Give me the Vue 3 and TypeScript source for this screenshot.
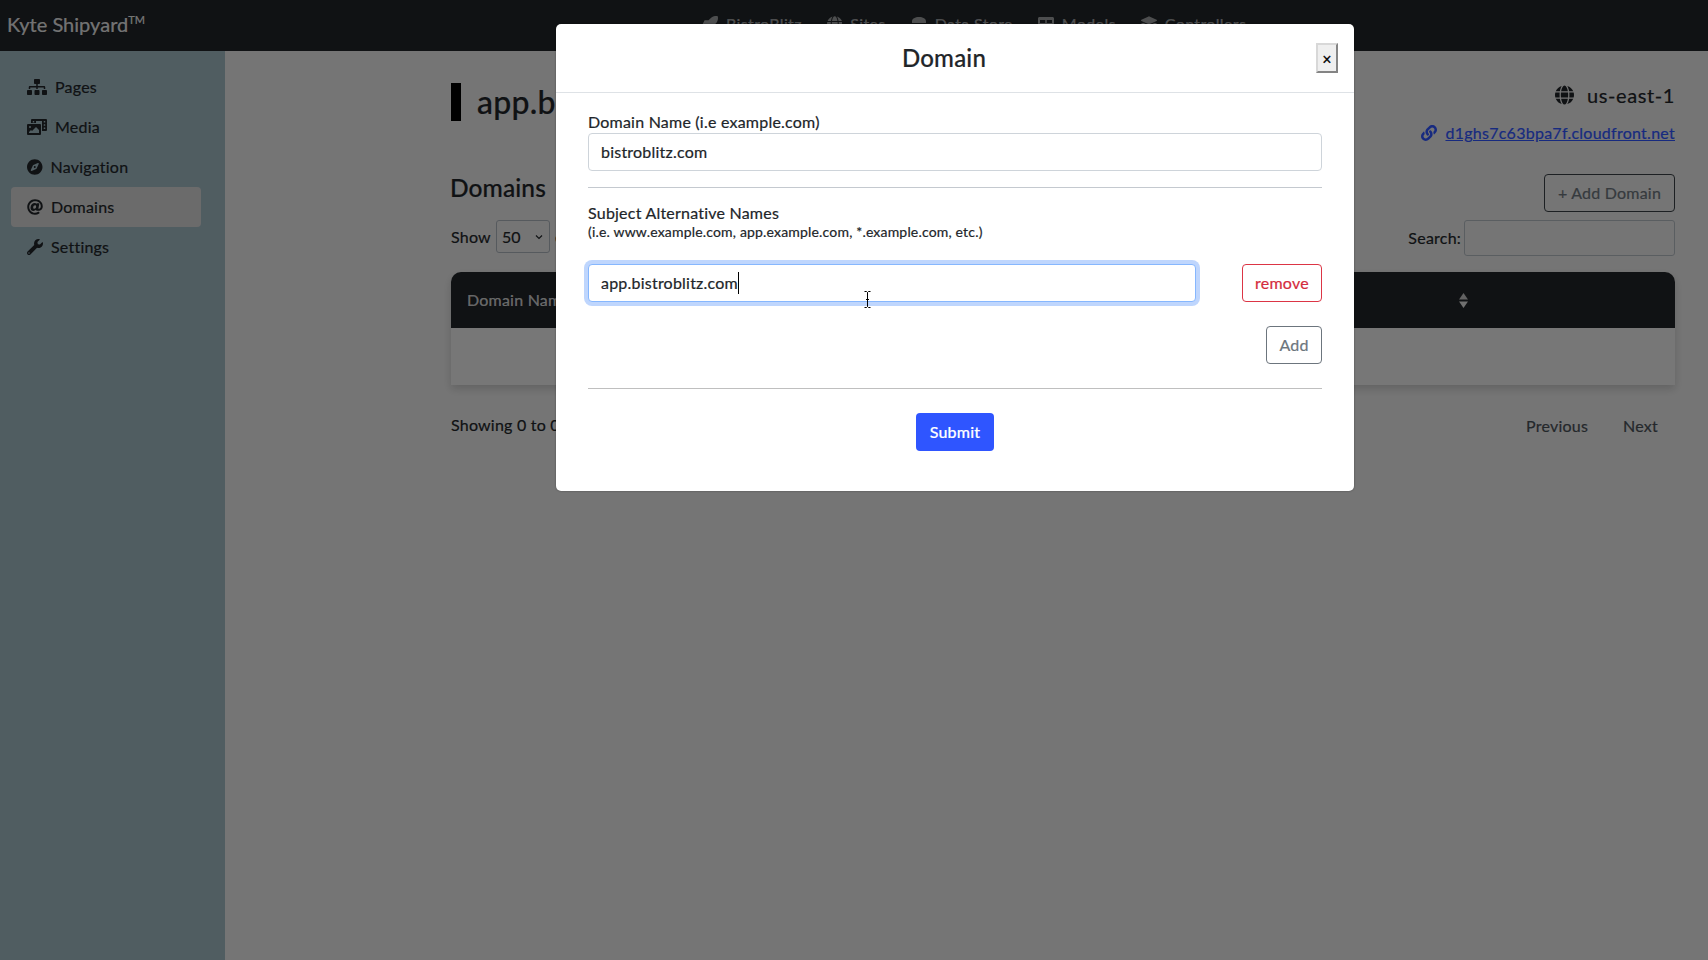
<script setup lang="ts">
interface Icon {
  w: number
  d: string
}

const icons: Record<string, Icon> = {
  sitemap: {
    w: 640,
    d: 'M128 352H32c-17.67 0-32 14.33-32 32v96c0 17.67 14.33 32 32 32h96c17.67 0 32-14.33 32-32v-96c0-17.67-14.33-32-32-32zm-24-80h192v48h48v-48h192v48h48v-57.59c0-21.17-17.23-38.41-38.41-38.41H344v-64h40c17.67 0 32-14.33 32-32V32c0-17.67-14.33-32-32-32H256c-17.67 0-32 14.33-32 32v96c0 17.67 14.33 32 32 32h40v64H94.41C73.23 224 56 241.23 56 262.41V320h48v-48zm264 80h-96c-17.67 0-32 14.33-32 32v96c0 17.67 14.33 32 32 32h96c17.67 0 32-14.33 32-32v-96c0-17.67-14.33-32-32-32zm240 0h-96c-17.67 0-32 14.33-32 32v96c0 17.67 14.33 32 32 32h96c17.67 0 32-14.33 32-32v-96c0-17.67-14.33-32-32-32z',
  },
  media: {
    w: 640,
    d: 'M608 0H160a32 32 0 0 0-32 32v96h160V64h192v320h128a32 32 0 0 0 32-32V32a32 32 0 0 0-32-32zM232 103a9 9 0 0 1-9 9h-30a9 9 0 0 1-9-9V73a9 9 0 0 1 9-9h30a9 9 0 0 1 9 9zm352 208a9 9 0 0 1-9 9h-30a9 9 0 0 1-9-9v-30a9 9 0 0 1 9-9h30a9 9 0 0 1 9 9zm0-104a9 9 0 0 1-9 9h-30a9 9 0 0 1-9-9v-30a9 9 0 0 1 9-9h30a9 9 0 0 1 9 9zm0-104a9 9 0 0 1-9 9h-30a9 9 0 0 1-9-9V73a9 9 0 0 1 9-9h30a9 9 0 0 1 9 9zM416 160H32a32 32 0 0 0-32 32v288a32 32 0 0 0 32 32h384a32 32 0 0 0 32-32V192a32 32 0 0 0-32-32zM96 224a32 32 0 1 1-32 32 32 32 0 0 1 32-32zm288 224H64v-32l64-64 32 32 128-128 96 96z',
  },
  compass: {
    w: 496,
    d: 'M225.38 233.37c-12.5 12.5-12.5 32.76 0 45.25 12.49 12.5 32.76 12.5 45.25 0 12.5-12.5 12.5-32.76 0-45.25-12.5-12.49-32.76-12.49-45.25 0zM248 8C111.03 8 0 119.03 0 256s111.03 248 248 248 248-111.03 248-248S384.97 8 248 8zm126.14 148.05L308.17 300.4a31.938 31.938 0 0 1-15.77 15.77l-144.34 65.97c-16.65 7.61-33.81-9.55-26.2-26.2l65.98-144.35a31.938 31.938 0 0 1 15.77-15.77l144.34-65.97c16.65-7.6 33.8 9.55 26.19 26.2z',
  },
  at: {
    w: 512,
    d: 'M256 8C118.941 8 8 118.919 8 256c0 137.059 110.919 248 248 248 48.154 0 95.342-14.14 135.408-40.223 12.005-7.815 14.625-24.288 5.552-35.372l-10.177-12.433c-7.671-9.371-21.179-11.667-31.373-5.129C325.92 429.757 291.314 440 256 440c-101.458 0-184-82.542-184-184S154.542 72 256 72c100.139 0 184 57.619 184 160 0 38.786-21.093 79.742-58.17 83.693-17.349-.454-16.91-12.857-13.476-30.024l23.433-121.11C394.653 149.75 383.308 136 368.225 136h-44.981a13.518 13.518 0 0 0-13.432 11.993l-.01.092c-14.697-17.901-40.448-21.775-59.971-21.775-74.58 0-137.831 62.234-137.831 151.46 0 65.303 36.785 105.87 96 105.87 26.984 0 57.369-15.637 74.991-38.333 9.522 34.104 40.613 34.103 70.71 34.103C462.609 379.41 504 307.798 504 232 504 95.653 394.023 8 256 8zm-21.68 304.43c-22.249 0-36.07-15.623-36.07-40.771 0-44.993 30.779-72.729 58.63-72.729 22.292 0 35.601 15.241 35.601 40.77 0 45.061-33.875 72.73-58.161 72.73z',
  },
  wrench: {
    w: 512,
    d: 'M507.73 109.1c-2.24-9.03-13.54-12.09-20.12-5.51l-74.36 74.36-67.88-11.31-11.31-67.88 74.36-74.36c6.62-6.62 3.43-17.9-5.66-20.16-47.38-11.74-99.55.91-136.58 37.93-39.64 39.64-50.55 97.1-34.05 147.2L18.74 402.76c-24.99 24.99-24.99 65.51 0 90.5 24.99 24.99 65.51 24.99 90.5 0l213.21-213.21c50.12 16.71 107.47 5.68 147.37-34.22 37.07-37.07 49.7-89.32 37.91-136.73zM64 472c-13.25 0-24-10.75-24-24 0-13.26 10.75-24 24-24s24 10.74 24 24c0 13.25-10.75 24-24 24z',
  },
  globe: {
    w: 496,
    d: 'M336.5 160C322 70.7 287.8 8 248 8s-74 62.7-88.5 152h177zM152 256c0 22.2 1.2 43.5 3.3 64h185.3c2.1-20.5 3.3-41.8 3.3-64s-1.2-43.5-3.3-64H155.3c-2.1 20.5-3.3 41.8-3.3 64zm324.7-96c-28.6-67.9-86.5-120.4-158-141.6 24.4 33.8 41.2 84.7 50 141.6h108zM177.2 18.4C105.8 39.6 47.8 92.1 19.3 160h108c8.7-56.9 25.5-107.8 49.9-141.6zM487.4 192H372.7c2.1 21 3.3 42.5 3.3 64s-1.2 43-3.3 64h114.6c5.5-20.5 8.6-41.8 8.6-64s-3.1-43.5-8.5-64zM120 256c0-21.5 1.2-43 3.3-64H8.6C3.2 212.5 0 233.8 0 256s3.2 43.5 8.6 64h114.6c-2-21-3.2-42.5-3.2-64zm39.5 96c14.5 89.3 48.7 152 88.5 152s74-62.7 88.5-152h-177zm159.3 141.6c71.4-21.2 129.4-73.7 158-141.6h-108c-8.8 56.9-25.6 107.8-50 141.6zM19.3 352c28.6 67.9 86.5 120.4 158 141.6-24.4-33.8-41.2-84.7-50-141.6h-108z',
  },
  link: {
    w: 512,
    d: 'M326.612 185.391c59.747 59.809 58.927 155.698.36 214.59-.11.12-.24.25-.36.37l-67.2 67.2c-59.27 59.27-155.699 59.262-214.96 0-59.27-59.26-59.27-155.7 0-214.96l37.106-37.106c9.84-9.84 26.786-3.3 27.294 10.606.648 17.722 3.826 35.527 9.69 52.721 1.986 5.822.567 12.262-3.783 16.612l-13.087 13.087c-28.026 28.026-28.905 73.66-1.155 101.96 28.024 28.579 74.086 28.749 102.325.51l67.2-67.19c28.191-28.191 28.073-73.757 0-101.83-3.701-3.694-7.429-6.564-10.341-8.569a16.037 16.037 0 0 1-6.947-12.606c-.396-10.567 3.348-21.456 11.698-29.806l21.054-21.055c5.521-5.521 14.182-6.199 20.584-1.731a152.482 152.482 0 0 1 20.522 17.197zM467.547 44.449c-59.261-59.262-155.69-59.27-214.96 0l-67.2 67.2c-.12.12-.25.25-.36.37-58.566 58.892-59.387 154.781.36 214.59a152.454 152.454 0 0 0 20.521 17.196c6.402 4.468 15.064 3.789 20.584-1.731l21.054-21.055c8.35-8.35 12.094-19.239 11.698-29.806a16.037 16.037 0 0 0-6.947-12.606c-2.912-2.005-6.64-4.875-10.341-8.569-28.073-28.073-28.191-73.639 0-101.83l67.2-67.19c28.239-28.239 74.3-28.069 102.325.51 27.75 28.3 26.872 73.934-1.155 101.96l-13.087 13.087c-4.35 4.35-5.769 10.79-3.783 16.612 5.864 17.194 9.042 34.999 9.69 52.721.509 13.906 17.454 20.446 27.294 10.606l37.106-37.106c59.271-59.259 59.271-155.699.001-214.959z',
  },
  rocket: {
    w: 512,
    d: 'M505 19c-2-9-9-15-17-17-60-13-150 4-222 76l-58 58H96c-9 0-17 5-21 13L10 279c-5 10 2 23 14 23h106l80 80v106c0 12 13 19 23 14l130-65c8-4 13-12 13-21V304l58-58c72-72 89-162 71-227z',
  },
  database: {
    w: 512,
    d: 'M256 32C130 32 32 80 32 176v48h448v-48C480 80 382 32 256 32zM0 256h512v48H0zM64 336h384v112c0 20-14 32-32 32H96c-18 0-32-12-32-32z',
  },
  table: {
    w: 512,
    d: 'M464 32H48C21 32 0 53 0 80v352c0 27 21 48 48 48h416c27 0 48-21 48-48V80c0-27-21-48-48-48zM232 224H64v-96h168zm216 0H280v-96h168zM232 416H64v-144h168zm216 0H280v-144h168z',
  },
  layers: {
    w: 512,
    d: 'M13 118 243 13c8-4 18-4 26 0l230 105c17 8 17 34 0 42L269 265c-8 4-18 4-26 0L13 160c-17-8-17-34 0-42zM499 240l-57-26-158 72c-18 8-38 8-56 0L70 214l-57 26c-17 8-17 34 0 42l230 104c8 4 18 4 26 0l230-104c17-8 17-34 0-42zM499 367l-57-26-158 72c-18 8-38 8-56 0L70 341l-57 26c-17 8-17 34 0 42l230 104c8 4 18 4 26 0l230-104c17-8 17-34 0-42z',
  },
}

const navLinks = [
  { label: 'BistroBlitz', icon: icons.rocket },
  { label: 'Sites', icon: icons.globe },
  { label: 'Data Store', icon: icons.database },
  { label: 'Models', icon: icons.table },
  { label: 'Controllers', icon: icons.layers },
]

const sideLinks = [
  { label: 'Pages', icon: icons.sitemap, active: false },
  { label: 'Media', icon: icons.media, active: false },
  { label: 'Navigation', icon: icons.compass, active: false },
  { label: 'Domains', icon: icons.at, active: true },
  { label: 'Settings', icon: icons.wrench, active: false },
]
</script>

<template>
  <div class="page">
    <header class="topbar">
      <span class="brand">Kyte Shipyard<sup>TM</sup></span>
      <nav class="topnav">
        <a v-for="item in navLinks" :key="item.label" class="topnav-link">
          <svg class="topnav-icon" :width="16 * item.icon.w / 512" height="16" :viewBox="`0 0 ${item.icon.w} 512`">
            <path :d="item.icon.d" fill="currentColor" />
          </svg>
          {{ item.label }}
        </a>
      </nav>
    </header>

    <div class="shell">
      <aside class="sidebar">
        <a v-for="item in sideLinks" :key="item.label" class="side-link" :class="{ active: item.active }">
          <svg :width="16 * item.icon.w / 512" height="16" :viewBox="`0 0 ${item.icon.w} 512`">
            <path :d="item.icon.d" fill="currentColor" />
          </svg>
          <span>{{ item.label }}</span>
        </a>
      </aside>

      <main class="content">
        <div class="site-head">
          <h1 class="site-title">app.bistroblitz.com</h1>
          <div class="site-meta">
            <div class="region">
              <svg width="19" height="20" viewBox="0 0 496 512"><path :d="icons.globe.d" fill="currentColor" /></svg>
              <span>us-east-1</span>
            </div>
            <div class="cdn">
              <svg width="16" height="16" viewBox="0 0 512 512"><path :d="icons.link.d" fill="currentColor" /></svg>
              <a>d1ghs7c63bpa7f.cloudfront.net</a>
            </div>
          </div>
        </div>

        <div class="section-head">
          <h3>Domains</h3>
          <button class="btn-add">+ Add Domain</button>
        </div>

        <div class="table-tools">
          <div class="length">
            Show
            <div class="select-wrap">
              <span>50</span>
              <svg width="8" height="6" viewBox="0 0 16 12"><path d="M2 3l6 6 6-6" fill="none" stroke="currentColor" stroke-width="2.4" /></svg>
            </div>
            entries
          </div>
          <div class="search">
            Search:
            <input class="search-input" type="text" />
          </div>
        </div>

        <div class="table">
          <div class="table-head">
            <span>Domain Name</span>
            <svg class="sort" width="9" height="15" viewBox="0 0 9 15">
              <path d="M4.5 0L9 6.5H0z" fill="#c4c4c4" />
              <path d="M4.5 15L9 8.5H0z" fill="#e0e0e0" />
            </svg>
          </div>
          <div class="table-body"></div>
        </div>

        <div class="table-foot">
          <span>Showing 0 to 0 of 0 entries</span>
          <div class="pager">
            <a>Previous</a>
            <a>Next</a>
          </div>
        </div>
      </main>
    </div>

    <div class="backdrop"></div>

    <div class="modal">
      <div class="modal-head">
        <h4>Domain</h4>
        <button class="close">×</button>
      </div>
      <form class="modal-body">
        <label class="field-label">Domain Name (i.e example.com)</label>
        <input class="field" type="text" value="bistroblitz.com" />
        <hr class="rule first" />
        <div class="field-label">Subject Alternative Names</div>
        <small class="hint">(i.e. www.example.com, app.example.com, *.example.com, etc.)</small>
        <div class="san-row">
          <div class="san-input">
            <input class="field focused" type="text" value="app.bistroblitz.com" />
            <span class="caret"></span>
          </div>
          <button type="button" class="btn-remove">remove</button>
        </div>
        <div class="add-row">
          <button type="button" class="btn-more">Add</button>
        </div>
        <hr class="rule" />
        <div class="submit-row">
          <button type="button" class="btn-submit">Submit</button>
        </div>
      </form>
      <!-- mouse pointer caught in the shot -->
      <svg class="pointer" width="7" height="17" viewBox="0 0 7 17">
        <path d="M.5.5h2l1 1 1-1h2M3.5 1.5v14M.5 16.5h2l1-1 1 1h2M2 8.5h3" fill="none" stroke="#000" stroke-width="1" />
      </svg>
    </div>
  </div>
</template>

<style scoped>
.page {
  position: relative;
  height: 960px;
  overflow: hidden;
  background: #ebebeb;
  color: #212529;
  font-family: "Lato", "Noto Sans", sans-serif;
  font-size: 16px;
  line-height: 24px;
  letter-spacing: 0.22px;
  -webkit-text-stroke: 0.2px currentColor;
}

.topbar {
  height: 51px;
  background: #212529;
  display: flex;
  align-items: center;
  box-sizing: border-box;
  padding: 0 7px 4px;
}
.brand {
  font-size: 20px;
  color: rgba(255, 255, 255, 0.9);
  letter-spacing: 0.02px;
}
.brand sup {
  font-size: 11px;
  line-height: 0;
}
.topnav {
  display: flex;
  gap: 25px;
  margin-left: 557px;
  letter-spacing: 0.36px;
}
.topnav-link {
  display: flex;
  align-items: center;
  gap: 8px;
  color: rgba(255, 255, 255, 0.55);
}

.shell {
  display: flex;
  height: 909px;
}
.sidebar {
  width: 225px;
  flex: none;
  box-sizing: border-box;
  background: #a0bac3;
  padding: 16px 24px 0 11px;
}
.side-link {
  display: flex;
  align-items: center;
  gap: 8px;
  height: 40px;
  padding-left: 16px;
  border-radius: 4px;
}
.side-link.active {
  background: #d7d7d7;
}

.content {
  flex: 1;
  padding: 29px 33px 0 226px;
}
.site-head {
  display: flex;
  justify-content: space-between;
  height: 94px;
}
.site-title {
  margin: 3px 0 0;
  height: 38px;
  padding-left: 16px;
  border-left: 10px solid #000;
  border-image: none;
  font-size: 32px;
  font-weight: 500;
  line-height: 38px;
}
.site-meta {
  display: flex;
  flex-direction: column;
  align-items: flex-end;
}
.region {
  display: flex;
  align-items: center;
  gap: 13px;
  height: 30px;
  font-size: 20px;
  letter-spacing: 0.6px;
}
.cdn {
  display: flex;
  align-items: center;
  gap: 8px;
  margin-top: 11px;
  color: #2f55ff;
}
.cdn a {
  text-decoration: underline;
  letter-spacing: 0.26px;
}

.section-head {
  display: flex;
  justify-content: space-between;
  align-items: flex-start;
}
.section-head h3 {
  margin: -3px 0 0 -1px;
  font-size: 24.5px;
  font-weight: 500;
  line-height: 34px;
  letter-spacing: 0.1px;
}
.btn-add {
  width: 131px;
  height: 38px;
  padding: 0;
  border: 1px solid #3a4046;
  border-radius: 4px;
  background: transparent;
  color: #6c757d;
  font: inherit;
  letter-spacing: inherit;
}

.table-tools {
  display: flex;
  justify-content: space-between;
  margin-top: 8px;
  height: 36px;
}
.length {
  display: flex;
  align-items: flex-start;
  gap: 5px;
  line-height: 33px;
}
.select-wrap {
  width: 54px;
  height: 33px;
  box-sizing: border-box;
  display: flex;
  align-items: center;
  justify-content: space-between;
  padding: 0 6px 0 5px;
  border: 1px solid #adb5bd;
  border-radius: 3px;
}
.search {
  display: flex;
  align-items: center;
  gap: 3px;
}
.search-input {
  width: 211px;
  height: 36px;
  box-sizing: border-box;
  border: 1px solid #b5bcc3;
  border-radius: 3px;
  background: transparent;
}

.table {
  margin-top: 16px;
  border-radius: 10px 10px 0 0;
  box-shadow: 0 4px 8px rgba(0, 0, 0, 0.16);
}
.table-head {
  height: 56px;
  background: #212529;
  border-radius: 10px 10px 0 0;
  color: rgba(255, 255, 255, 0.8);
  display: flex;
  align-items: center;
  padding: 0 16px;
  position: relative;
}
.sort {
  position: absolute;
  left: 1008px;
  top: 21px;
}
.table-body {
  height: 57px;
  background: #efefef;
}
.table-foot {
  display: flex;
  justify-content: space-between;
  margin-top: 28px;
}
.pager {
  display: flex;
  gap: 35px;
  padding: 1px 17px 0 0;
  color: #495057;
}

.backdrop {
  position: absolute;
  inset: 0;
  background: rgba(0, 0, 0, 0.5);
}

.modal {
  position: absolute;
  left: 556px;
  top: 24px;
  width: 798px;
  height: 467px;
  background: #fff;
  border-radius: 5px;
  box-shadow: 0 0 2px rgba(0, 0, 0, 0.4);
}
.modal-head {
  height: 69px;
  box-sizing: border-box;
  display: flex;
  align-items: center;
  padding: 0 16px;
  border-bottom: 1px solid #dee2e6;
}
.modal-head h4 {
  flex: 1;
  margin: -2px 0 0;
  text-align: center;
  font-size: 24px;
  font-weight: 500;
  line-height: 29px;
}
.close {
  width: 22px;
  height: 30px;
  padding: 3px 0 0;
  background: #efefef;
  border: 2px outset #d8d8d8;
  color: #000;
  font-size: 16px;
  font-family: "Liberation Sans", sans-serif;
}
.modal-body {
  padding: 17px 32px 0;
}
.field-label {
  display: block;
  height: 23px;
  line-height: 24px;
}
.field {
  display: block;
  width: 100%;
  height: 38px;
  box-sizing: border-box;
  padding: 0 12px 2px;
  border: 1px solid #ced4da;
  border-radius: 4px;
  color: #212529;
  background: #fff;
  font: inherit;
  letter-spacing: inherit;
  outline: none;
}
.field.focused {
  border-color: #86b7fe;
  box-shadow: 0 0 0 4px #bfd6fd;
}
.rule {
  margin: 24px 0 0;
  border: 0;
  border-top: 1px solid #bfbfbf;
}
.rule.first {
  margin: 16px 0 13px;
  border-top-color: #c4c9cf;
}
.hint {
  display: block;
  font-size: 14px;
  line-height: 16px;
  letter-spacing: 0.18px;
}
.san-row {
  display: flex;
  justify-content: space-between;
  margin-top: 24px;
}
.san-input {
  position: relative;
  width: 608px;
}
.caret {
  position: absolute;
  left: 150px;
  top: 8px;
  width: 1px;
  height: 22px;
  background: #000;
}
.btn-remove {
  width: 80px;
  height: 38px;
  padding: 0;
  border: 1px solid #dc3545;
  border-radius: 4px;
  background: #fff;
  color: #d42c3e;
  font: inherit;
  letter-spacing: inherit;
}
.add-row {
  display: flex;
  justify-content: flex-end;
  margin-top: 24px;
}
.btn-more {
  width: 56px;
  height: 38px;
  padding: 0;
  border: 1px solid #6c757d;
  border-radius: 4px;
  background: #fff;
  color: #6c757d;
  font: inherit;
  letter-spacing: inherit;
}
.submit-row {
  display: flex;
  justify-content: center;
  margin-top: 24px;
}
.btn-submit {
  width: 78px;
  height: 38px;
  padding: 0;
  border: 0;
  border-radius: 4px;
  background: #2f55ff;
  color: #fff;
  font: inherit;
  letter-spacing: inherit;
  font-weight: 500;
}
.pointer {
  position: absolute;
  left: 308px;
  top: 267px;
}
</style>

<style>
html,
body {
  margin: 0;
  background: #757575;
}
</style>
